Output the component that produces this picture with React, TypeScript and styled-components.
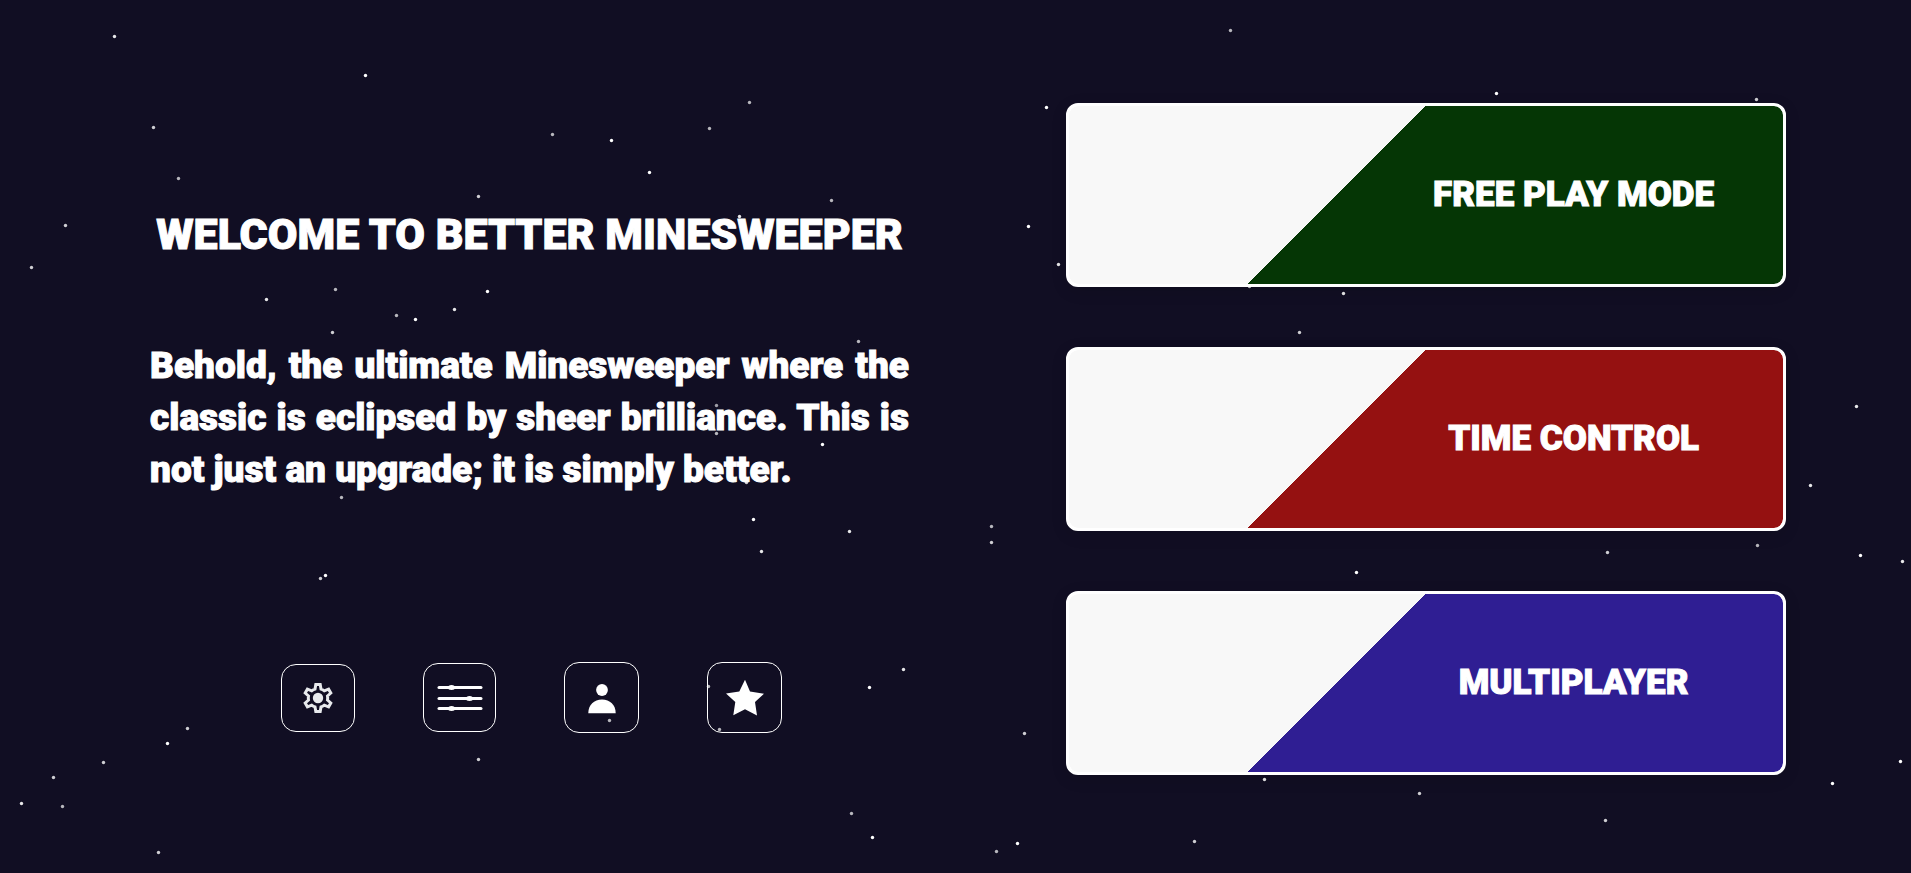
import React from "react";
import styled, { createGlobalStyle } from "styled-components";

const GlobalStyle = createGlobalStyle`
  *, *::before, *::after { box-sizing: border-box; }
  body {
    margin: 0;
    background: #110e23;
    color: #fff;
    font-family: Roboto, "Liberation Sans", sans-serif;
    font-weight: 900;
    -webkit-text-stroke: 1px #fff;
  }
`;

const Page = styled.main`
  position: relative;
  min-height: 100vh;
  display: grid;
  grid-template-columns: minmax(0, 759fr) minmax(0, 720fr);
  column-gap: 157px;
  align-items: start;
  padding: 103px 125px 98px 150px;
`;

const Sky = styled.svg`
  position: absolute;
  inset: 0;
  width: 100%;
  height: 100%;
  fill: #fff;
  pointer-events: none;
`;

const Intro = styled.section`
  position: relative;
  display: flex;
  flex-direction: column;
  padding-top: 101px;
`;

const Title = styled.h1`
  margin: 0 0 76px;
  font-size: 43px;
  line-height: 60px;
  font-weight: 900;
  text-align: center;
`;

const Lead = styled.p`
  margin: 0 0 166px;
  font-size: 37px;
  line-height: 52px;
  text-align: justify;
`;

const Toolbar = styled.nav`
  display: flex;
  justify-content: center;
  align-items: center;
  gap: 68px;
  padding-left: 4px;
`;

const IconButton = styled.button<{ $width: number; $height: number }>`
  display: flex;
  align-items: center;
  justify-content: center;
  width: ${(p) => p.$width}px;
  height: ${(p) => p.$height}px;
  padding: 0;
  border: 1px solid #fff;
  border-radius: 15px;
  background: transparent;
  color: #fff;
  cursor: pointer;
`;

const Modes = styled.section`
  position: relative;
  display: flex;
  flex-direction: column;
  gap: 60px;
`;

const ModeButton = styled.button<{ $color: string }>`
  height: 184px;
  padding: 0 0 0 41%;
  border: 3px solid #fff;
  border-radius: 12px;
  background: linear-gradient(135deg, #f8f8f8 40%, ${(p) => p.$color} 40%) padding-box, #fff;
  box-shadow: 0 4px 16px rgba(0, 0, 0, 0.12);
  color: #fff;
  font: inherit;
  font-size: 35px;
  line-height: 40px;
  text-align: center;
  cursor: pointer;
`;

/* x, y, opacity */
const stars: [number, number, number][] = [
  [114.5, 36.5, 0.9], [365.5, 75.5, 1], [153.5, 127.5, 0.8], [552.5, 134.5, 0.7],
  [611.5, 140.5, 1], [178.5, 178.5, 0.7], [478.5, 196.5, 0.8], [65.5, 225.5, 0.8],
  [31.5, 267.5, 0.8], [335.5, 289.5, 0.7], [266.5, 299.5, 0.9], [487.5, 291.5, 1],
  [396.5, 315.5, 0.7], [415.5, 319.5, 1], [454.5, 309.5, 0.9], [332.5, 332.5, 0.8],
  [320.5, 578.5, 0.8], [325.5, 575.5, 1], [187.5, 728.5, 0.8], [167.5, 743.5, 1],
  [103.5, 762.5, 0.8], [53.5, 777.5, 0.8], [21.5, 803.5, 0.9], [62.5, 806.5, 0.7],
  [158.5, 852.5, 0.8], [478.5, 759.5, 0.8], [609.5, 720.5, 0.7], [341.5, 497.5, 0.7],
  [749.5, 102.5, 0.7], [709.5, 128.5, 0.7], [649.5, 172.5, 1], [831.5, 200.5, 0.7],
  [1046.5, 107.5, 1], [1028.5, 226.5, 1], [1058.5, 264.5, 0.9], [858.5, 341.5, 0.7],
  [739.5, 216.5, 0.9], [716.5, 405.5, 0.6], [716.5, 433.5, 0.7], [822.5, 444.5, 1],
  [746.5, 482.5, 0.8], [753.5, 519.5, 1], [849.5, 531.5, 0.9], [761.5, 551.5, 0.9],
  [991.5, 526.5, 0.7], [991.5, 542.5, 0.8], [903.5, 669.5, 0.9], [869.5, 687.5, 1],
  [708.5, 686.5, 0.7], [719.5, 729.5, 0.7], [1024.5, 733.5, 0.8], [851.5, 813.5, 0.7],
  [872.5, 837.5, 1], [1017.5, 843.5, 1], [996.5, 851.5, 0.7], [1343.5, 293.5, 0.9],
  [1249.5, 286.5, 0.8], [1496.5, 93.5, 1], [1756.5, 99.5, 0.8], [1230.5, 30.5, 0.7],
  [1299.5, 332.5, 0.8], [1856.5, 406.5, 0.9], [1810.5, 485.5, 0.9], [1757.5, 545.5, 0.7],
  [1607.5, 552.5, 0.8], [1860.5, 555.5, 1], [1902.5, 561.5, 0.9], [1356.5, 572.5, 1],
  [1900.5, 761.5, 1], [1832.5, 783.5, 1], [1264.5, 779.5, 0.9], [1419.5, 793.5, 0.8],
  [1605.5, 820.5, 0.8], [1194.5, 841.5, 0.8],
];

const GearIcon = () => (
  <svg width="36" height="36" viewBox="0 0 36 36" aria-hidden="true">
    <path
      d="M15.8 4.5h4.4l.8 4.600c1.300.4 2.300 1 3.300 1.800l4.300-1.700 2.200 3.800-3.300 3q.4 2 0 4l3.300 3-2.200 3.800-4.300-1.700c-1 .8-2 1.400-3.300 1.800l-.8 4.600h-4.400l-.8-4.600c-1.300-.4-2.300-1-3.300-1.800l-4.300 1.700-2.200-3.800 3.300-3q-.4-2 0-4l-3.300-3 2.200-3.800 4.300 1.700c1-.8 2-1.400 3.300-1.800z"
      fill="none"
      stroke="#e8eaed"
      strokeWidth="3"
    />
    <circle cx="18" cy="18" r="5.200" fill="#e8eaed" />
  </svg>
);

const SlidersIcon = () => (
  <svg width="46" height="26" viewBox="0 0 46 26" fill="currentColor" aria-hidden="true">
    <rect x="0.5" y="1" width="45" height="3" rx="1.500" />
    <rect x="0.5" y="12" width="45" height="3" rx="1.500" />
    <rect x="0.5" y="22" width="45" height="3" rx="1.500" />
    <ellipse cx="14.500" cy="2.500" rx="3.500" ry="2.500" />
    <ellipse cx="32.500" cy="13.500" rx="3.500" ry="2.500" />
    <ellipse cx="14.500" cy="23.500" rx="3.500" ry="2.500" />
  </svg>
);

const PersonIcon = () => (
  <svg width="36" height="36" viewBox="0 0 36 36" fill="currentColor" aria-hidden="true">
    <circle cx="18" cy="10" r="5.900" />
    <path d="M4.300 33.200C4.300 25 10 19.500 18 19.500S31.700 25 31.700 33.200z" />
  </svg>
);

const StarIcon = () => (
  <svg width="40" height="38" viewBox="0 0 40 38" fill="currentColor" aria-hidden="true">
    <path d="M20 .8l5 11.700 14 2.200-9 8.400 2 13.400-12-6.300-11.700 6 2-13.100L1 14.500l13.300-2z" />
  </svg>
);

const tools = [
  { label: "Settings", width: 74, height: 68, Icon: GearIcon },
  { label: "Options", width: 73, height: 69, Icon: SlidersIcon },
  { label: "Profile", width: 75, height: 71, Icon: PersonIcon },
  { label: "Favourites", width: 75, height: 71, Icon: StarIcon },
];

const modes = [
  { label: "FREE PLAY MODE", color: "#053605" },
  { label: "TIME CONTROL", color: "#951111" },
  { label: "MULTIPLAYER", color: "#2f1e93" },
];

export default function App() {
  return (
    <>
      <GlobalStyle />
      <Page>
        <Sky viewBox="0 0 1911 873" preserveAspectRatio="xMidYMid slice" aria-hidden="true">
          {stars.map(([x, y, opacity]) => (
            <circle key={`${x}-${y}`} cx={x} cy={y} r="1.7" opacity={opacity} />
          ))}
        </Sky>
        <Intro>
          <Title>WELCOME TO BETTER MINESWEEPER</Title>
          <Lead>
            Behold, the ultimate Minesweeper where the classic is eclipsed by sheer brilliance. This is not
            just an upgrade; it is simply better.
          </Lead>
          <Toolbar aria-label="Menu">
            {tools.map(({ label, width, height, Icon }) => (
              <IconButton key={label} type="button" aria-label={label} $width={width} $height={height}>
                <Icon />
              </IconButton>
            ))}
          </Toolbar>
        </Intro>
        <Modes>
          {modes.map(({ label, color }) => (
            <ModeButton key={label} type="button" $color={color}>
              {label}
            </ModeButton>
          ))}
        </Modes>
      </Page>
    </>
  );
}
